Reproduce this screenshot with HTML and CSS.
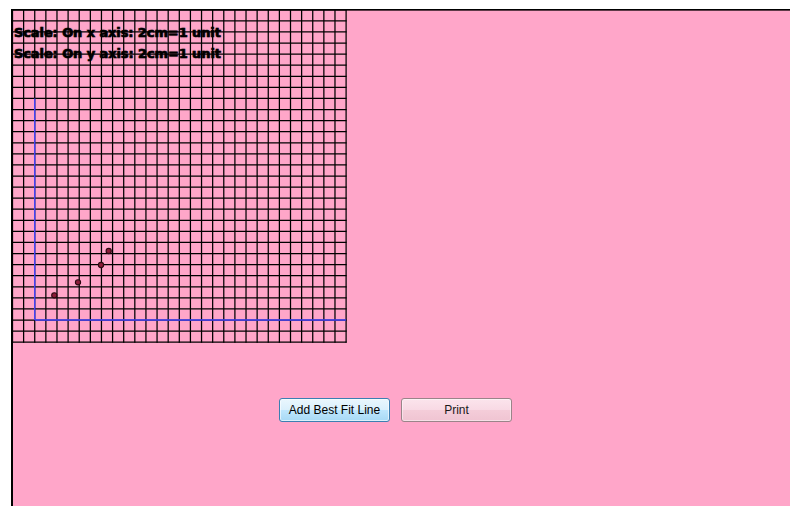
FILE: index.html
```html
<!DOCTYPE html>
<html>
<head>
<meta charset="utf-8">
<title>Scatter graph</title>
<link rel="stylesheet" href="styles.css">
</head>
<body>
<div class="frame">
  <div class="chart">
    <div class="labels">
      <div class="label">Scale: On x axis: 2cm=1 unit</div>
      <div class="label">Scale: On y axis: 2cm=1 unit</div>
    </div>
    <svg class="grid" id="grid" width="337" height="335" viewBox="0 0 337 335" xmlns="http://www.w3.org/2000/svg"></svg>
  </div>
  <div class="actions">
    <button class="btn btn-fit" type="button">Add Best Fit Line</button>
    <button class="btn btn-print" type="button">Print</button>
  </div>
</div>
<script src="script.js"></script>
</body>
</html>
```
FILE: styles.css
```css
html, body {
  margin: 0;
  padding: 0;
  background: #ffffff;
}

.frame {
  margin: 9px 0 0 11px;
  width: 777px;
  height: 496px;
  background: #ffa6c9;
  border-top: 1px solid #000;
  border-left: 2px solid #000;
  box-shadow: inset 0 1px 0 #5e3a48;
}

.chart {
  position: relative;
  width: 334px;
  height: 332px;
}

.labels {
  padding: 12px 0 0 1px;
}

.label {
  font-family: "DejaVu Sans", "Liberation Sans", sans-serif;
  font-weight: bold;
  font-size: 13px;
  line-height: 21px;
  color: #000;
  letter-spacing: -0.1px;
  -webkit-text-stroke: 0.6px #000;
  text-shadow: 0 0 1.5px rgba(0, 0, 0, 0.6);
  white-space: nowrap;
}

.grid {
  position: absolute;
  left: -2px;
  top: -1px;
  overflow: visible;
}

.actions {
  display: flex;
  gap: 11px;
  padding-left: 266px;
  margin-top: 56px;
}

.btn {
  box-sizing: border-box;
  width: 111px;
  height: 24px;
  border-radius: 3px;
  font-family: "Liberation Sans", Arial, sans-serif;
  font-size: 12px;
  padding: 0;
  cursor: default;
}

.btn-fit {
  border: 1px solid #3c7fb1;
  color: #000;
  background: linear-gradient(to bottom, #eaf6fd 0%, #d9f0fc 50%, #bee6fd 51%, #a7d9f5 100%);
  box-shadow: inset 0 0 0 1px rgba(255, 255, 255, 0.6);
}

.btn-print {
  border: 1px solid #9a8489;
  color: #1a1a1a;
  background: linear-gradient(to bottom, #fbe4ec 0%, #f8d9e4 50%, #f4cdd9 51%, #f0c4d2 100%);
  box-shadow: inset 0 0 0 1px rgba(255, 255, 255, 0.45);
}
```
FILE: script.js
```javascript
(function () {
  var svg = document.getElementById('grid');
  var NS = 'http://www.w3.org/2000/svg';
  function el(name, attrs) {
    var e = document.createElementNS(NS, name);
    for (var k in attrs) e.setAttribute(k, attrs[k]);
    svg.appendChild(e);
    return e;
  }
  var dx = 11.12, dy = 11.08, x0 = 1.5, y0 = 0.8;
  var xEnd = x0 + 30 * dx, yEnd = y0 + 30 * dy;
  for (var i = 0; i <= 30; i++) {
    var x = x0 + i * dx;
    el('line', { x1: x, y1: 0.3, x2: x, y2: yEnd + 0.5, stroke: '#000', 'stroke-width': 1.25 });
  }
  for (var j = 0; j <= 30; j++) {
    var y = y0 + j * dy;
    el('line', { x1: 1, y1: y, x2: xEnd + 0.5, y2: y, stroke: '#000', 'stroke-width': 1.25 });
  }
  var ox = x0 + 2 * dx, oy = y0 + 28 * dy;
  el('line', { x1: ox, y1: y0 + 8 * dy, x2: ox, y2: oy, stroke: '#4646ff', 'stroke-width': 1.4 });
  el('line', { x1: ox, y1: oy, x2: xEnd, y2: oy, stroke: '#4646ff', 'stroke-width': 1.4 });
  var pts = [[43.3, 286.3], [67, 273.3], [90, 256], [97.7, 242]];
  pts.forEach(function (p) {
    el('circle', { cx: p[0], cy: p[1], r: 2.6, fill: '#8a1c38', stroke: '#2a0810', 'stroke-width': 1.1 });
  });
})();
```
